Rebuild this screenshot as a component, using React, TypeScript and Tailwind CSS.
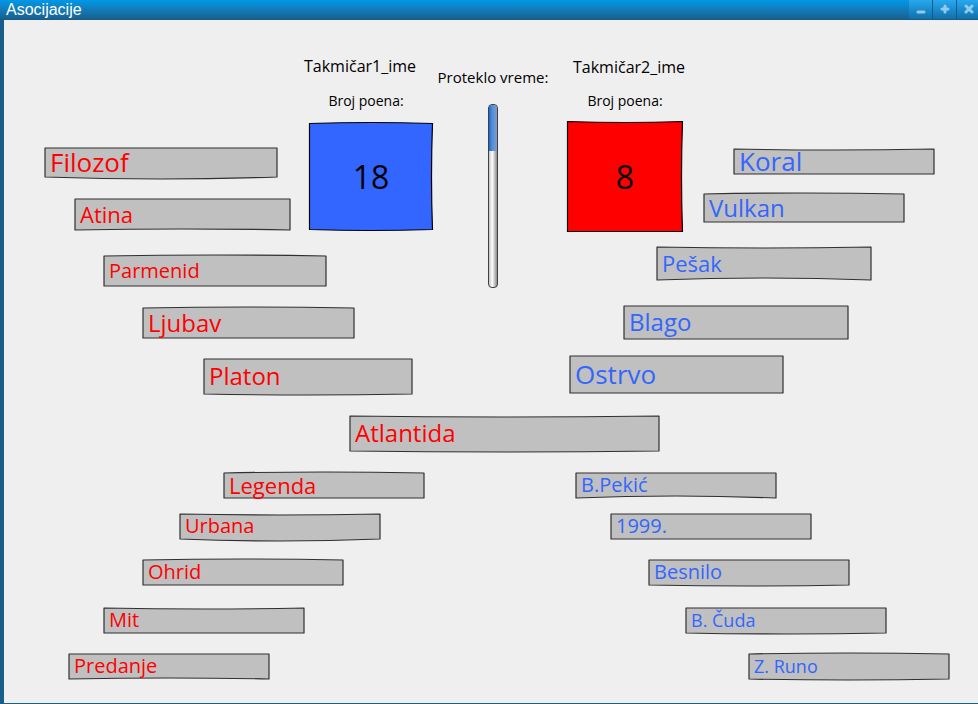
import React from "react";

type Field = {
  value: string;
  w: number;
  h: number;
  place: string;
  text: string;
  top?: number;
  bottom?: number;
};

const upperLeft: Field[] = [
  { value: "Filozof", w: 234, h: 31, place: "ml-10", text: "text-[26px]", bottom: 2 },
  { value: "Atina", w: 217, h: 33, place: "ml-[70px] mt-5", text: "text-[22px]", bottom: -1 },
  { value: "Parmenid", w: 224, h: 32, place: "ml-[99px] mt-6", text: "text-[20px]", top: -1 },
  { value: "Ljubav", w: 213, h: 32, place: "ml-[138px] mt-5", text: "text-[24px]", top: -1 },
  { value: "Platon", w: 210, h: 37, place: "ml-[199px] mt-[19px]", text: "text-[24px]", bottom: 1 },
];

const upperRight: Field[] = [
  { value: "Koral", w: 202, h: 27, place: "mr-[43px]", text: "text-[26px]", top: 1 },
  { value: "Vulkan", w: 202, h: 30, place: "mr-[73px] mt-[18px]", text: "text-[24px]", top: -1 },
  { value: "Pešak", w: 216, h: 35, place: "mr-[106px] mt-[23px]", text: "text-[22px]", top: 1, bottom: -2 },
  { value: "Blago", w: 226, h: 35, place: "mr-[129px] mt-6", text: "text-[24px]" },
  { value: "Ostrvo", w: 215, h: 39, place: "mr-[194px] mt-[15px]", text: "text-[26px]" },
];

const lowerLeft: Field[] = [
  { value: "Legenda", w: 202, h: 27, place: "ml-[219px]", text: "text-[22px]", top: -1 },
  { value: "Urbana", w: 202, h: 27, place: "ml-[175px] mt-[14px]", text: "text-[20px]", top: 1, bottom: 2 },
  { value: "Ohrid", w: 202, h: 27, place: "ml-[138px] mt-[19px]", text: "text-[20px]", top: -1 },
  { value: "Mit", w: 202, h: 27, place: "ml-[99px] mt-[21px]", text: "text-[20px]", top: 1 },
  { value: "Predanje", w: 202, h: 27, place: "ml-16 mt-[19px]", text: "text-[20px]", bottom: -1 },
];

const lowerRight: Field[] = [
  { value: "B.Pekić", w: 202, h: 27, place: "mr-[201px]", text: "text-[20px]", bottom: -2 },
  { value: "1999.", w: 202, h: 27, place: "mr-[166px] mt-[14px]", text: "text-[20px]" },
  { value: "Besnilo", w: 202, h: 27, place: "mr-32 mt-[19px]", text: "text-[20px]", bottom: 1 },
  { value: "B. Čuda", w: 202, h: 27, place: "mr-[91px] mt-[21px]", text: "text-[18px]", bottom: 1 },
  { value: "Z. Runo", w: 202, h: 27, place: "mr-7 mt-[19px]", text: "text-[18px]", top: -1, bottom: 1 },
];

/* Hand-drawn rectangle whose edges bow by a pixel or two. */
function Sketch({
  w,
  h,
  top = 0,
  bottom = 0,
  right = 0,
  inset = 1,
  fill,
  stroke = "#303030",
}: {
  w: number;
  h: number;
  top?: number;
  bottom?: number;
  right?: number;
  inset?: number;
  fill: string;
  stroke?: string;
}) {
  const r = w - inset;
  const b = h - inset;
  return (
    <svg
      aria-hidden="true"
      className="col-start-1 row-start-1 overflow-visible"
      width={w}
      height={h}
      viewBox={`0 0 ${w} ${h}`}
    >
      <path
        d={`M${inset} ${inset}Q${w / 2} ${inset + top * 2} ${r} ${inset}Q${r + right * 2} ${h / 2} ${r} ${b}Q${w / 2} ${b + bottom * 2} ${inset} ${b}Z`}
        fill={fill}
        stroke={stroke}
        strokeWidth="1.2"
        strokeLinejoin="round"
      />
    </svg>
  );
}

function Box({ field, color }: { field: Field; color: string }) {
  return (
    <div className={`grid w-fit items-center ${field.place}`}>
      <Sketch w={field.w} h={field.h} top={field.top} bottom={field.bottom} fill="#c0c0c0" />
      <input
        type="text"
        size={1}
        aria-label={field.value}
        defaultValue={field.value}
        className={`z-10 col-start-1 row-start-1 h-0 min-h-full w-full min-w-0 bg-transparent px-[6px] pb-[2px] leading-none outline-none ${field.text} ${color}`}
      />
    </div>
  );
}

function Stack({ fields, side }: { fields: Field[]; side: "left" | "right" }) {
  return (
    <div
      className={`col-start-1 row-start-1 flex flex-col ${
        side === "left" ? "items-start justify-self-start" : "items-end justify-self-end"
      }`}
    >
      {fields.map((f) => (
        <Box key={f.value} field={f} color={side === "left" ? "text-[#ff0000]" : "text-[#3366ff]"} />
      ))}
    </div>
  );
}

function WindowButton({ label, children }: { label: string; children: React.ReactNode }) {
  return (
    <button
      type="button"
      aria-label={label}
      className="flex h-[19px] w-6 items-center justify-center border-r border-[#125a88] bg-linear-to-b from-[#28a8f0] to-[#0f70aa]"
    >
      <svg width="11" height="11" viewBox="0 0 11 11" stroke="#8fcbed" strokeWidth="3" strokeLinecap="round">
        {children}
      </svg>
    </button>
  );
}

export default function App() {
  return (
    <div className="flex min-h-screen flex-col overflow-hidden border-b border-[#1c6088] bg-[#efefef] font-['Comic_Sans_MS','Open_Sans',sans-serif] text-black">
      <header className="flex h-5 items-start justify-between border-b border-[#175b86] bg-linear-to-b from-[#0098e8] to-[#16618f]">
        <h1 className="pl-[6px] font-['Liberation_Sans',sans-serif] text-[16px] leading-[19px] text-white">
          Asocijacije
        </h1>
        <div className="-mr-[3px] flex">
          <WindowButton label="Minimize">
            <path d="M3 8H9" />
          </WindowButton>
          <WindowButton label="Maximize">
            <path d="M3 5H9M6 2V8" />
          </WindowButton>
          <WindowButton label="Close">
            <path d="M3 2L9 8M9 2L3 8" />
          </WindowButton>
        </div>
      </header>

      <main className="flex grow flex-col border-l-4 border-[#175f8a]">
        <section className="grid pt-[35px]">
          <div className="col-start-1 row-start-1 grid pt-[92px]">
            <Stack fields={upperLeft} side="left" />
            <div className="col-start-1 row-start-1 grid pt-px">
              <Stack fields={upperRight} side="right" />
            </div>
          </div>

          <div className="col-start-1 row-start-1 flex items-start justify-self-center self-start">
            <div className="flex w-[134px] flex-col">
              <h2 className="pl-[5px] text-[16px] leading-[22px] whitespace-nowrap">Takmičar1_ime</h2>
              <p className="mt-[14px] text-center text-[14px] leading-5">Broj poena:</p>
              <div className="mt-3 grid place-items-center self-end">
                <Sketch w={124} h={107} inset={0.5} top={-1} bottom={1} right={-1} fill="#3366ff" stroke="#000" />
                <output className="col-start-1 row-start-1 text-[32px] leading-10">18</output>
              </div>
            </div>

            <div className="flex w-[120px] flex-col items-center pt-[11px]">
              <span id="elapsed" className="text-[15px] leading-[22px] whitespace-nowrap">
                Proteklo vreme:
              </span>
              <div
                role="progressbar"
                aria-labelledby="elapsed"
                aria-valuenow={25}
                className="mt-4 h-[184px] w-[10px] overflow-hidden rounded-[4px] border border-[#404040] bg-linear-to-r from-[#c4c4c4] via-white via-40% to-[#8c8c8c]"
              >
                <div className="h-1/4 bg-linear-to-r from-[#1f68c4] via-[#4a90e2] via-40% to-[#8798bc]" />
              </div>
            </div>

            <div className="ml-[14px] flex w-[116px] flex-col pt-px">
              <h2 className="pl-[6px] text-[16px] leading-[22px] whitespace-nowrap">Takmičar2_ime</h2>
              <p className="mt-[13px] text-center text-[14px] leading-5">Broj poena:</p>
              <div className="mt-[10px] grid place-items-center">
                <Sketch w={116} h={111} inset={0.5} top={1} right={-1} fill="#ff0000" stroke="#000" />
                <output className="col-start-1 row-start-1 text-[32px] leading-10">8</output>
              </div>
            </div>
          </div>
        </section>

        <section className="flex justify-center py-5 pl-[27px]">
          <Box
            field={{ value: "Atlantida", w: 311, h: 37, place: "", text: "text-[24px]", top: 1, bottom: 1 }}
            color="text-[#ff0000]"
          />
        </section>

        <section className="grid pb-[23px]">
          <Stack fields={lowerLeft} side="left" />
          <Stack fields={lowerRight} side="right" />
        </section>
      </main>
    </div>
  );
}
